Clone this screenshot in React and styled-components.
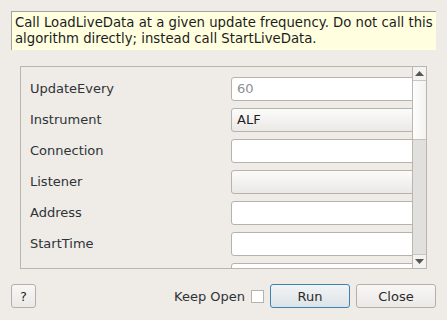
import React from "react";
import styled, { createGlobalStyle } from "styled-components";

const Global = createGlobalStyle`
  html, body { margin: 0; padding: 0; background: #efebe7; }
  body { font-family: "DejaVu Sans", "Liberation Sans", sans-serif; font-size: 13px; color: #2e3436; }
  * { box-sizing: border-box; }
`;

const Dialog = styled.div`
  width: 447px;
  height: 320px;
  display: flex;
  flex-direction: column;
  padding: 11px 11px 0 11px;
`;

const Tip = styled.div`
  height: 39px;
  background: #ffffdf;
  border-top: 1px solid #a6a39f;
  border-left: 1px solid #a6a39f;
  padding: 3px 0 0 3px;
  font-size: 13.25px;
  line-height: 16px;
  color: #1c1c1c;
  width: 425px;
  white-space: nowrap;
`;

const Frame = styled.div`
  margin: 16px 0 0 9px;
  width: 407px;
  height: 203px;
  border: 1px solid #b9b5b1;
  display: flex;
`;

const Viewport = styled.div`
  flex: 1;
  overflow: hidden;
  padding: 10px 0 0 9px;
`;

const Form = styled.div`
  display: grid;
  grid-template-columns: 201px 190px;
  row-gap: 7px;
  align-items: center;
`;

const Label = styled.div`
  height: 24px;
  line-height: 24px;
  white-space: nowrap;
`;

const Field = styled.div`
  height: 24px;
  border: 1px solid #b6b2ad;
  border-radius: 3px;
  padding: 0 5px;
  line-height: 22px;
  background: ${(p) =>
    p.$kind === "combo" || p.$kind === "disabled"
      ? "linear-gradient(#fbfbfa, #ebe9e6)"
      : "#ffffff"};
  color: ${(p) => (p.$placeholder ? "#8f8f8f" : "#1e1e1e")};
`;

const ScrollBar = styled.div`
  width: 14px;
  border-left: 1px solid #b9b5b1;
  display: flex;
  flex-direction: column;
  background: #e2e0dc;
`;

const Arrow = styled.div`
  height: 14px;
  background: #f4f3f1;
  display: flex;
  align-items: center;
  justify-content: center;
  border-${(p) => (p.$down ? "top" : "bottom")}: 1px solid #c9c6c2;
`;

const Handle = styled.div`
  height: 59px;
  background: linear-gradient(90deg, #fdfdfd, #f3f2f0);
  border-bottom: 1px solid #c5c2be;
`;

const Track = styled.div`
  flex: 1;
`;

const Bottom = styled.div`
  display: flex;
  align-items: center;
  margin-top: 15px;
  height: 24px;
`;

const Button = styled.button`
  font: inherit;
  color: #2a2a2a;
  height: 24px;
  width: ${(p) => p.$w}px;
  border: 1px solid ${(p) => (p.$focus ? "#3e81b5" : "#b3afab")};
  border-radius: 3px;
  background: ${(p) =>
    p.$focus ? "linear-gradient(#f2f4f6, #dde3e8)" : "linear-gradient(#f8f7f6, #ebe9e6)"};
  padding: 0;
  margin-left: ${(p) => p.$ml || 0}px;
`;

const Spacer = styled.div`
  flex: 1;
`;

const CheckText = styled.span`
  margin-right: 6px;
`;

const Check = styled.div`
  width: 13px;
  height: 13px;
  background: #fff;
  border: 1px solid #b6b2ad;
  margin-right: 6px;
`;

const Tri = ({ down }) => (
  <svg width="9" height="5" viewBox="0 0 9 5">
    <path d={down ? "M0 0H9L4.5 5Z" : "M0 5H9L4.5 0Z"} fill="#555753" />
  </svg>
);

const rows = [
  ["UpdateEvery", "line", "60", true],
  ["Instrument", "combo", "ALF"],
  ["Connection", "line", ""],
  ["Listener", "disabled", ""],
  ["Address", "line", ""],
  ["StartTime", "line", ""],
  ["", "line", ""],
];

export default function App() {
  return (
    <>
      <Global />
      <Dialog>
        <Tip>
          Call LoadLiveData at a given update frequency. Do not call this
          <br />
          algorithm directly; instead call StartLiveData.
        </Tip>
        <Frame>
          <Viewport>
            <Form>
              {rows.map(([label, kind, value, ph], i) => (
                <React.Fragment key={i}>
                  <Label>{label}</Label>
                  <Field $kind={kind} $placeholder={ph}>
                    {value}
                  </Field>
                </React.Fragment>
              ))}
            </Form>
          </Viewport>
          <ScrollBar>
            <Arrow>
              <Tri />
            </Arrow>
            <Handle />
            <Track />
            <Arrow $down>
              <Tri down />
            </Arrow>
          </ScrollBar>
        </Frame>
        <Bottom>
          <Button $w={25}>?</Button>
          <Spacer />
          <CheckText>Keep Open</CheckText>
          <Check />
          <Button $w={80} $focus>
            Run
          </Button>
          <Button $w={80} $ml={6}>
            Close
          </Button>
        </Bottom>
      </Dialog>
    </>
  );
}
